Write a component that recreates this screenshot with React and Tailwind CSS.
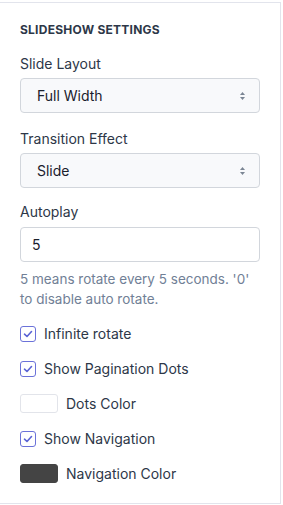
function SelectBox({ value }) {
  return (
    <div className="relative h-[35px] rounded border border-[#d2d6dc] bg-[#f8f9fb] flex items-center pl-[16px] text-[14px] text-[#1a202c]">
      {value}
      <svg className="absolute right-[13px] top-1/2 -translate-y-1/2" width="7" height="10" viewBox="0 0 7 10">
        <path d="M3.5 1 L6 4 H1 Z" fill="#7b8594" />
        <path d="M3.5 9 L6 6 H1 Z" fill="#7b8594" />
      </svg>
    </div>
  );
}

function Check({ label }) {
  return (
    <div className="flex items-center h-[35px]">
      <span className="w-[16px] h-[16px] rounded-[3px] border border-[#6b72d9] flex items-center justify-center bg-white">
        <svg width="10" height="8" viewBox="0 0 10 8" fill="none">
          <path d="M1.5 4.2 L4 6.5 L8.5 1.5" stroke="#5a63d4" strokeWidth="1.6" strokeLinecap="round" strokeLinejoin="round" />
        </svg>
      </span>
      <span className="ml-[8px] text-[14px] text-[#2d3748]">{label}</span>
    </div>
  );
}

function Swatch({ color, label }) {
  return (
    <div className="flex items-center h-[35px]">
      <span className={`w-[38px] h-[19px] rounded-[3px] border ${color}`} />
      <span className="ml-[8px] text-[14px] text-[#2d3748]">{label}</span>
    </div>
  );
}

export default function App() {
  return (
    <div className="w-[283px] h-[505px] bg-white font-['Inter',sans-serif] pt-[2px]">
      <div className="w-[281px] h-[502px] border-t border-r border-b border-[#e2e4ec] px-[20px] pt-[19px]">
        <h2 className="text-[12px] font-bold tracking-[0.02em] text-[#2d3748] leading-[16px]">SLIDESHOW SETTINGS</h2>

        <div className="mt-[16px] text-[14px] text-[#2d3748] leading-[20px]">Slide Layout</div>
        <div className="mt-[4px]">
          <SelectBox value="Full Width" />
        </div>

        <div className="mt-[16px] text-[14px] text-[#2d3748] leading-[20px]">Transition Effect</div>
        <div className="mt-[4px]">
          <SelectBox value="Slide" />
        </div>

        <div className="mt-[14px] text-[14px] text-[#2d3748] leading-[20px]">Autoplay</div>
        <div className="mt-[5px] h-[35px] rounded border border-[#d2d6dc] bg-white flex items-center pl-[11px] text-[14px] text-[#1a202c]">
          5
        </div>
        <p className="mt-[7px] text-[13.5px] leading-[20px] text-[#718096]">
          5 means rotate every 5 seconds. '0' to disable auto rotate.
        </p>

        <div className="mt-[7px]">
          <Check label="Infinite rotate" />
          <Check label="Show Pagination Dots" />
          <Swatch color="bg-white border-[#e2e4ea]" label="Dots Color" />
          <Check label="Show Navigation" />
          <Swatch color="bg-[#444444] border-[#444444]" label="Navigation Color" />
        </div>
      </div>
    </div>
  );
}
